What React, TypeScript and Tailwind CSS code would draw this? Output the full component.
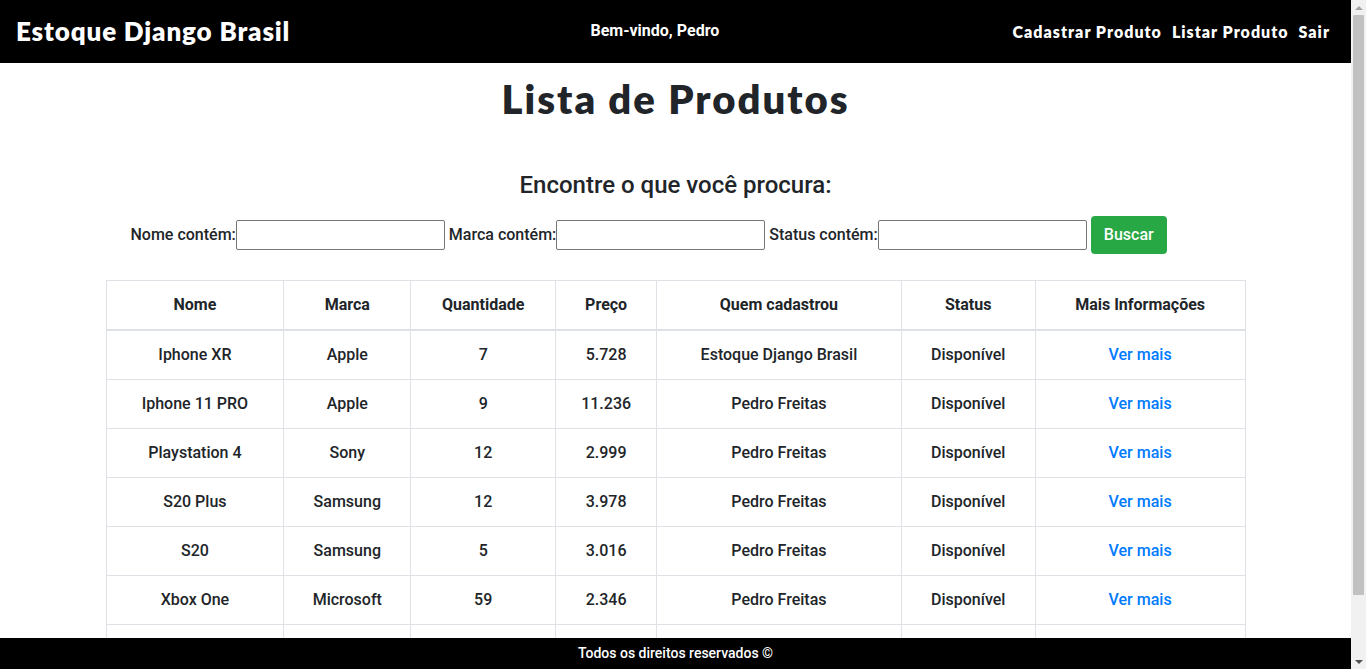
import React from 'react';

const produtos = [
  { nome: 'Iphone XR', marca: 'Apple', qtd: 7, preco: '5.728', quem: 'Estoque Django Brasil', status: 'Disponível' },
  { nome: 'Iphone 11 PRO', marca: 'Apple', qtd: 9, preco: '11.236', quem: 'Pedro Freitas', status: 'Disponível' },
  { nome: 'Playstation 4', marca: 'Sony', qtd: 12, preco: '2.999', quem: 'Pedro Freitas', status: 'Disponível' },
  { nome: 'S20 Plus', marca: 'Samsung', qtd: 12, preco: '3.978', quem: 'Pedro Freitas', status: 'Disponível' },
  { nome: 'S20', marca: 'Samsung', qtd: 5, preco: '3.016', quem: 'Pedro Freitas', status: 'Disponível' },
  { nome: 'Xbox One', marca: 'Microsoft', qtd: 59, preco: '2.346', quem: 'Pedro Freitas', status: 'Disponível' },
  { nome: 'Galaxy Tab S6', marca: 'Samsung', qtd: 4, preco: '3.499', quem: 'Pedro Freitas', status: 'Disponível' },
  { nome: 'Macbook Air', marca: 'Apple', qtd: 3, preco: '8.999', quem: 'Pedro Freitas', status: 'Disponível' },
];

const headers = ['Nome', 'Marca', 'Quantidade', 'Preço', 'Quem cadastrou', 'Status', 'Mais Informações'];
const widths = ['w-[178px]', 'w-[127px]', 'w-[145px]', 'w-[101px]', 'w-[245px]', 'w-[134px]', 'w-[210px]'];

const brand = { fontFamily: '"Lato", "Open Sans", sans-serif' };

function Scrollbar() {
  return (
    <div className="w-[15px] shrink-0 bg-[#f1f1f1] flex flex-col items-center">
      <div className="h-[15px] flex items-center justify-center">
        <div className="w-0 h-0 border-l-[4px] border-r-[4px] border-b-[4px] border-l-transparent border-r-transparent border-b-[#a3a3a3]" />
      </div>
      <div className="w-[11px] h-[580px] bg-[#c1c1c1] rounded-[1px]" />
      <div className="flex-1" />
      <div className="h-[15px] flex items-center justify-center">
        <div className="w-0 h-0 border-l-[4px] border-r-[4px] border-t-[4px] border-l-transparent border-r-transparent border-t-[#505050]" />
      </div>
    </div>
  );
}

export default function App() {
  return (
    <div className="h-screen flex bg-white text-[#212529] overflow-hidden" style={{ fontFamily: 'Roboto, "Liberation Sans", sans-serif' }}>
      <div className="flex-1 flex flex-col min-w-0">
        <header className="h-[63px] shrink-0 bg-black flex items-center justify-between px-4 text-white">
          <a className="text-[26px] font-extrabold tracking-[0.85px] pb-[1px]" style={brand}>
            Estoque Django Brasil
          </a>
          <span className="text-[16px] font-bold -mt-[1px] ml-[12px]">Bem-vindo, Pedro</span>
          <nav className="flex items-center text-[16px] font-extrabold tracking-[1px]" style={brand}>
            <a className="px-[5px]">Cadastrar Produto</a>
            <a className="px-[5px]">Listar Produto</a>
            <a className="px-[5px]">Sair</a>
          </nav>
        </header>

        <div className="flex-1 overflow-hidden">
          <main className="w-[1140px] mx-auto">
            <h1 className="text-center text-[40px] font-extrabold tracking-[2px] leading-[1.2] mt-[12px]" style={brand}>
              Lista de Produtos
            </h1>

            <h4 className="text-center text-[24px] font-medium leading-[1.2] mt-[48px]">
              Encontre o que você procura:
            </h4>

            <form className="flex items-center mt-[16px] pl-[25px] text-[16px] font-medium">
              <label>Nome contém:</label>
              <input className="w-[209px] h-[30px] border border-[#767676] rounded-[2px]" />
              <label className="ml-[4px]">Marca contém:</label>
              <input className="w-[209px] h-[30px] border border-[#767676] rounded-[2px]" />
              <label className="ml-[4px]">Status contém:</label>
              <input className="w-[209px] h-[30px] border border-[#767676] rounded-[2px]" />
              <button type="button" className="ml-[4px] h-[38px] w-[76px] rounded-[4px] bg-[#28a745] text-white font-medium">
                Buscar
              </button>
            </form>

            <table className="w-[1140px] mt-[26px] mb-4 border-collapse text-center text-[16px] font-medium">
              <thead>
                <tr>
                  {headers.map((h, i) => (
                    <th key={h} className={`${widths[i]} border border-[#dee2e6] border-b-2 p-[12px] font-bold leading-[24px]`}>
                      {h}
                    </th>
                  ))}
                </tr>
              </thead>
              <tbody>
                {produtos.map((p) => (
                  <tr key={p.nome}>
                    <td className="border border-[#dee2e6] p-[12px] leading-[24px]">{p.nome}</td>
                    <td className="border border-[#dee2e6] p-[12px] leading-[24px]">{p.marca}</td>
                    <td className="border border-[#dee2e6] p-[12px] leading-[24px]">{p.qtd}</td>
                    <td className="border border-[#dee2e6] p-[12px] leading-[24px]">{p.preco}</td>
                    <td className="border border-[#dee2e6] p-[12px] leading-[24px]">{p.quem}</td>
                    <td className="border border-[#dee2e6] p-[12px] leading-[24px]">{p.status}</td>
                    <td className="border border-[#dee2e6] p-[12px] leading-[24px]">
                      <a className="text-[#007bff]">Ver mais</a>
                    </td>
                  </tr>
                ))}
              </tbody>
            </table>
          </main>
        </div>

        <footer className="h-[31px] shrink-0 bg-black text-white flex items-center justify-center text-[14px] font-medium">
          Todos os direitos reservados ©
        </footer>
      </div>
      <Scrollbar />
    </div>
  );
}
